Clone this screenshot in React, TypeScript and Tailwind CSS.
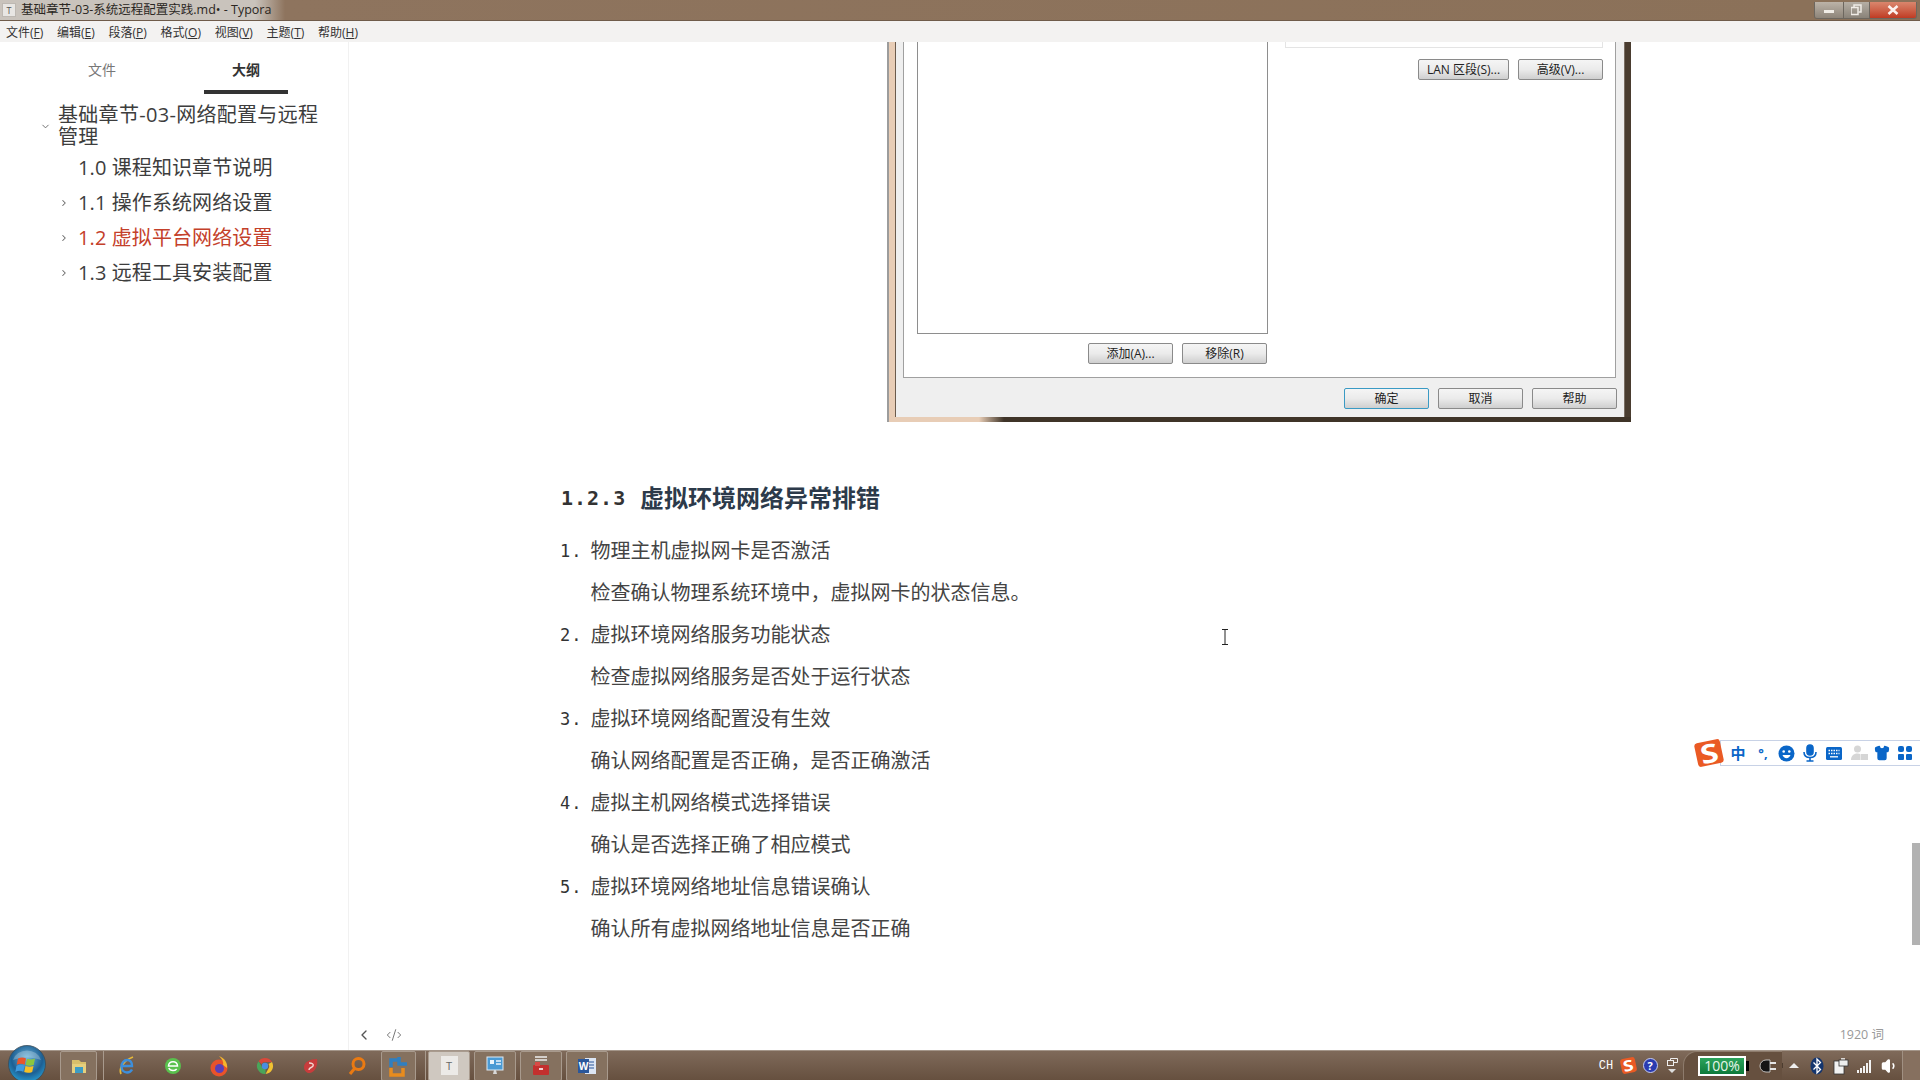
import { ChevronDown, ChevronLeft, ChevronRight, CodeXml, Shirt, Volume1 } from "lucide-react";

const menuItems = [
  { label: "文件", key: "F" },
  { label: "编辑", key: "E" },
  { label: "段落", key: "P" },
  { label: "格式", key: "O" },
  { label: "视图", key: "V" },
  { label: "主题", key: "T" },
  { label: "帮助", key: "H" },
];

const outline = [
  { text: "1.0 课程知识章节说明", arrow: false, active: false },
  { text: "1.1 操作系统网络设置", arrow: true, active: false },
  { text: "1.2 虚拟平台网络设置", arrow: true, active: true },
  { text: "1.3 远程工具安装配置", arrow: true, active: false },
];

const steps = [
  { title: "物理主机虚拟网卡是否激活", desc: "检查确认物理系统环境中，虚拟网卡的状态信息。" },
  { title: "虚拟环境网络服务功能状态", desc: "检查虚拟网络服务是否处于运行状态" },
  { title: "虚拟环境网络配置没有生效", desc: "确认网络配置是否正确，是否正确激活" },
  { title: "虚拟主机网络模式选择错误", desc: "确认是否选择正确了相应模式" },
  { title: "虚拟环境网络地址信息错误确认", desc: "确认所有虚拟网络地址信息是否正确" },
];

function WinButton({ label, primary, className }: { label: string; primary?: boolean; className?: string }) {
  return (
    <div
      className={`h-[21px] w-[85px] flex items-center justify-center rounded-[2px] border bg-linear-to-b from-[#f5f5f5] via-[#ebebeb] to-[#cfcfcf] text-[12px] leading-none text-[#222] ${
        primary ? "border-[#3a9ac4]" : "border-[#8a8a8a]"
      } ${className ?? ""}`}
    >
      {label}
    </div>
  );
}

function TitleBar() {
  return (
    <div className="h-[21px] shrink-0 flex items-center border-b border-[#6f5b4a] bg-[linear-gradient(to_right,#c9c3bc_0,#c9c3bc_255px,#8e745e_285px,#8b7159_1800px)]">
      <div className="w-[14px] h-[14px] ml-[2px] bg-[#e8e6e3] border border-[#bdb8b2] flex items-center justify-center text-[9px] leading-none text-[#555]">T</div>
      <span className="ml-[5px] pt-[1px] text-[12.5px] leading-none text-[#2a2622]">基础章节-03-系统远程配置实践.md• - Typora</span>
      <div className="ml-auto mr-[3px] h-[17px] w-[103px] flex border border-t-0 border-[#6d675f] rounded-b-[3px] overflow-hidden">
        <div className="w-[28px] bg-linear-to-b from-[#bcb3a8] to-[#8e857a] flex items-center justify-center">
          <div className="w-[10px] h-[3px] mt-[4px] bg-[#f0ece6]" />
        </div>
        <div className="w-[27px] bg-linear-to-b from-[#b5aea4] to-[#8a8379] border-x border-[#6d675f] flex items-center justify-center">
          <svg width="12" height="12" viewBox="0 0 12 12" fill="none" stroke="#f0ece6" strokeWidth="1.5">
            <rect x="0" y="3.5" width="7" height="7" />
            <path d="M3 3V1h7v7H7.5" />
          </svg>
        </div>
        <div className="flex-1 bg-linear-to-b from-[#d9866d] to-[#bf3a22] flex items-center justify-center">
          <svg width="12" height="10" viewBox="0 0 12 10" stroke="#fbf2ee" strokeWidth="2.6">
            <path d="M1.5 1l9 8M10.5 1l-9 8" />
          </svg>
        </div>
      </div>
    </div>
  );
}

function MenuBar() {
  return (
    <div className="h-[21px] shrink-0 flex items-center gap-[13.7px] pl-[6px] pt-[2px] bg-[#f3f2f1] text-[12px] leading-none text-[#333]">
      {menuItems.map((item) => (
        <span key={item.key}>
          {item.label}(<span className="underline">{item.key}</span>)
        </span>
      ))}
    </div>
  );
}

function Sidebar() {
  return (
    <div className="w-[349px] shrink-0 border-r border-[#f1f1f1] text-[#3d3d3d]">
      <div className="h-[52px] flex">
        <div className="w-[204px] flex items-start justify-center pt-[18px] text-[14px] leading-[19px] text-[#777]">文件</div>
        <div className="w-[84px] h-[52px] flex items-start justify-center pt-[18px] border-b-4 border-[#333] text-[14px] leading-[19px] font-bold text-[#333]">大纲</div>
      </div>
      <div className="pt-[10px]">
        <div className="flex items-center pl-[40px] text-[20px] leading-[22px]">
          <ChevronDown className="w-[11px] h-[11px] mr-[7px] shrink-0 text-[#666]" strokeWidth={2} />
          <span className="w-[272px] tracking-[0.3px]">基础章节-03-网络配置与远程管理</span>
        </div>
        <div className="mt-[2px]">
          {outline.map((row) => (
            <div key={row.text} className={`h-[35px] flex items-center pl-[59px] text-[20px] tracking-[0.1px] ${row.active ? "text-[#c4402a]" : ""}`}>
              <div className="w-[19px] shrink-0">
                {row.arrow && <ChevronRight className="w-[10px] h-[10px] text-[#666]" strokeWidth={2.5} />}
              </div>
              <span>{row.text}</span>
            </div>
          ))}
        </div>
      </div>
    </div>
  );
}

function NetworkDialog() {
  return (
    <div className="ml-[538px] w-[744px] h-[380px] flex flex-col border-l-2 border-[#9c9c9c] text-[12px]">
      <div className="flex-1 min-h-0 flex">
        <div className="w-[7px] bg-[#e8cdb6] border-r border-[#6b5b4c]" />
        <div className="flex-1 bg-[#efefef] flex flex-col">
          <div className="ml-[7px] mr-[8px] flex-1 min-h-0 flex bg-white border-x border-b border-[#a0a0a0]">
            <div className="w-[381px] pl-[13px] flex flex-col">
              <div className="w-[351px] h-[292px] border-x border-b border-[#8e8e8e] bg-white" />
              <div className="w-[351px] flex justify-end gap-[9px] mt-[9px] pr-[1px]">
                <WinButton label="添加(A)..." />
                <WinButton label="移除(R)" />
              </div>
            </div>
            <div className="flex-1 pr-[12px]">
              <div className="h-[6px] border-x border-b border-[#e4e4e4]" />
              <div className="flex justify-end gap-[9px] mt-[11px]">
                <WinButton label="LAN 区段(S)..." className="w-[91px]" />
                <WinButton label="高级(V)..." />
              </div>
            </div>
          </div>
          <div className="h-[39px] shrink-0 flex items-start justify-end gap-[9px] pt-[10px] pr-[7px]">
            <WinButton label="确定" primary />
            <WinButton label="取消" />
            <WinButton label="帮助" />
          </div>
        </div>
        <div className="w-[7px] bg-[#4a3d30] border-l border-[#7a6f64]" />
      </div>
      <div className="h-[5px] shrink-0 bg-[linear-gradient(to_right,#e8cdb6_0,#e8cdb6_90px,#3f3428_115px,#3f3428_100%)]" />
    </div>
  );
}

function Article() {
  return (
    <div className="flex-1 min-h-0 overflow-hidden">
      <NetworkDialog />
      <h2 className="ml-[212px] mt-[55px] h-[42px] flex items-center text-[24px] font-bold text-[#2c3a4a]">
        <span className="w-[79px] font-['DejaVu_Sans_Mono',monospace] text-[20px] tracking-[1px] text-[#333]">1.2.3</span>
        <span>虚拟环境网络异常排错</span>
      </h2>
      <ol className="ml-[211px] mt-[11px] text-[20px] leading-[42px] text-[#444]">
        {steps.map((step, i) => (
          <li key={step.title} className="flex">
            <span className="w-[30.5px] shrink-0 font-['DejaVu_Sans_Mono',monospace] text-[17px] tracking-[1px] text-[#333]">{i + 1}.</span>
            <div>
              <p>{step.title}</p>
              <p>{step.desc}</p>
            </div>
          </li>
        ))}
      </ol>
    </div>
  );
}

function StatusBar() {
  return (
    <div className="h-[30px] shrink-0 flex items-center pl-[7px] pr-[36px] text-[#999]">
      <ChevronLeft className="w-[16px] h-[16px] text-[#555]" strokeWidth={2} />
      <CodeXml className="w-[16px] h-[16px] ml-[14px] text-[#777]" strokeWidth={1.5} />
      <span className="ml-auto text-[12.5px]">1920 词</span>
    </div>
  );
}

function SogouLogo({ size }: { size: "lg" | "sm" }) {
  const box = size === "lg" ? "w-[26px] h-[24px] text-[26px]" : "w-[15px] h-[15px] text-[15px]";
  return (
    <div className={`${box} -rotate-12 rounded-[3px] bg-[#ea5a24] flex items-center justify-center font-bold leading-none text-white`}>
      <span className="scale-x-125">S</span>
    </div>
  );
}

function SogouBar() {
  return (
    <div className="absolute left-[1696px] top-[740px] flex items-center">
      <div className="relative z-10 -mr-[2px]">
        <SogouLogo size="lg" />
      </div>
      <div className="w-[200px] h-[26px] flex items-center border border-r-0 border-[#c8d2e6] bg-white text-[#0a66c8]">
        <span className="w-[22px] ml-[6px] text-center text-[15px] font-bold leading-none">中</span>
        <span className="w-[24px] ml-[2px] text-center text-[13px] font-bold leading-none">°,</span>
        <svg className="ml-[3px]" width="17" height="17" viewBox="0 0 17 17">
          <circle cx="8.5" cy="8.5" r="8" fill="#0a66c8" />
          <circle cx="5.7" cy="6.5" r="1.3" fill="#fff" />
          <circle cx="11.3" cy="6.5" r="1.3" fill="#fff" />
          <path d="M4.5 10h8c-.6 2-2.200 3.200-4 3.200S5.100 12 4.500 10z" fill="#fff" />
        </svg>
        <svg className="ml-[7px]" width="16" height="18" viewBox="0 0 16 18" fill="none" stroke="#0a66c8" strokeWidth="1.6">
          <rect x="5" y="1" width="6" height="10" rx="3" fill="#0a66c8" />
          <path d="M2 8c0 3.500 2.500 5.500 6 5.500s6-2 6-5.500M8 13.500V17M4.500 17h7" />
        </svg>
        <svg className="ml-[8px]" width="16" height="13" viewBox="0 0 16 13">
          <rect width="16" height="13" rx="1.5" fill="#0a66c8" />
          <path d="M2.500 3.500h11M2.500 6.500h11" stroke="#fff" strokeWidth="1.300" strokeDasharray="1.500 1" />
          <path d="M4 9.800h8" stroke="#fff" strokeWidth="1.300" />
        </svg>
        <svg className="ml-[9px]" width="17" height="16" viewBox="0 0 17 16" fill="#d6d6d6">
          <circle cx="6.500" cy="4" r="3.500" />
          <path d="M0 15c0-4 2.500-6.500 6.500-6.500 1.300 0 2.300.3 3 .7V15z" />
          <rect x="10" y="9" width="7" height="6" />
        </svg>
        <Shirt className="w-[16px] h-[16px] ml-[6px] fill-[#0a66c8]" />
        <svg className="ml-[8px]" width="14" height="14" viewBox="0 0 14 14" fill="#0a66c8">
          <rect width="6" height="6" rx="2" />
          <rect x="8" width="6" height="6" rx="2" />
          <rect y="8" width="6" height="6" rx="1" />
          <rect x="8" y="8" width="6" height="6" rx="1" />
        </svg>
      </div>
    </div>
  );
}

function StartOrb() {
  return (
    <svg className="absolute left-[8px] -top-[6px]" width="38" height="38" viewBox="0 0 38 38">
      <defs>
        <radialGradient id="orb" cx="50%" cy="35%" r="70%">
          <stop offset="0%" stopColor="#6fb7dc" />
          <stop offset="60%" stopColor="#1d5f93" />
          <stop offset="100%" stopColor="#2aa7dc" />
        </radialGradient>
      </defs>
      <circle cx="19" cy="19" r="18.5" fill="url(#orb)" stroke="#3b4b57" strokeWidth="0.8" />
      <path d="M5 15a14.500 13 0 0 1 28 0c-8-3.500-20-3.500-28 0z" fill="#fff" fillOpacity="0.25" />
      <path d="M10 13.500q4-2 8 0l-1.300 6.200q-4-1.800-8 0z" fill="#e8562c" />
      <path d="M19 13.700q4 1.600 8-.2l-1.300 6.400q-4 1.600-8 .1z" fill="#8cc63f" />
      <path d="M8.500 20.700q4-1.800 8 0l-1.200 6q-4-1.800-8 .2z" fill="#3f9be0" />
      <path d="M17.500 21q4 1.500 8-.1l-1.300 6q-4 1.700-8 .2z" fill="#f6c025" />
    </svg>
  );
}

function AppIcon({ name }: { name: string }) {
  switch (name) {
    case "folder":
      return (
        <svg width="20" height="20" viewBox="0 0 20 20">
          <path d="M3 4h7l2 2h5v3H3z" fill="#d9bf6a" />
          <rect x="3" y="8" width="14" height="9" fill="#e6cf7d" />
          <rect x="6" y="11" width="8" height="6" fill="#3d9cc4" />
        </svg>
      );
    case "ie":
      return (
        <svg width="22" height="22" viewBox="0 0 22 22" fill="none">
          <path d="M5 19C3 15 6 6 17 2" stroke="#e6b93a" strokeWidth="1.8" />
          <path d="M16 14.500c-1 2-2.700 3-5 3-3.300 0-5.500-2.600-5.500-6s2.400-6.500 5.700-6.500 5 2.700 4.800 6H6" stroke="#3d8fdc" strokeWidth="2.4" />
        </svg>
      );
    case "green":
      return (
        <svg width="18" height="18" viewBox="0 0 18 18">
          <circle cx="9" cy="9" r="8" fill="#59c14d" />
          <path d="M13.500 9H4.500c0-2.500 2-4.300 4.500-4.300S13.500 6.500 13.500 9zM4.800 11c.6 1.500 2.200 2.500 4.200 2.500 1.500 0 2.800-.6 3.700-1.600" stroke="#fff" strokeWidth="1.500" fill="none" />
        </svg>
      );
    case "firefox":
      return (
        <svg width="20" height="22" viewBox="0 0 20 22">
          <circle cx="10" cy="13" r="8.500" fill="#e8532b" />
          <path d="M10 1c3 3 5 6 4 9l4 3c1-4-2-10-8-12z" fill="#f7b52d" />
          <circle cx="10.500" cy="13.500" r="4.500" fill="#5a3fb8" />
        </svg>
      );
    case "chrome":
      return (
        <svg width="18" height="18" viewBox="0 0 18 18">
          <path d="M9 1a8 8 0 0 1 7 4H9a4 4 0 0 0-3.500 2L2.600 4.200A8 8 0 0 1 9 1z" fill="#d9483a" />
          <path d="M16 5a8 8 0 0 1-6.500 12l3-5.500A4 4 0 0 0 12.500 7z" fill="#f1c232" />
          <path d="M9.500 17A8 8 0 0 1 2.600 4.200l3 5.300a4 4 0 0 0 4 2.500z" fill="#4aa55a" />
          <circle cx="9" cy="9" r="3.200" fill="#4a8ee0" />
        </svg>
      );
    case "red":
      return (
        <svg width="18" height="18" viewBox="0 0 18 18">
          <path d="M2 10C2 5 8 2 15 2c1 5-1 13-7 14-4 .5-6-3-6-6z" fill="#c83c3c" />
          <path d="M7 6c3 0 5 1 4 3s-4 1-4 4" stroke="#f2d6d0" strokeWidth="1.500" fill="none" />
        </svg>
      );
    case "search":
      return (
        <svg width="20" height="20" viewBox="0 0 20 20" fill="none" stroke="#ea7a12" strokeWidth="3">
          <circle cx="11.500" cy="8" r="5.500" />
          <path d="M7.500 12.500L3 18" />
        </svg>
      );
    case "box":
      return (
        <svg width="22" height="24" viewBox="0 0 22 24" fill="none" strokeWidth="3.500">
          <path d="M3 13V6h8" stroke="#2f7fc1" />
          <path d="M11 3v7h8" stroke="#2f7fc1" />
          <path d="M3 14v7h12v-7" stroke="#e88c1e" />
        </svg>
      );
    case "typora":
      return (
        <div className="w-[17px] h-[19px] bg-[#eceae7] flex items-center justify-center text-[11px] leading-none text-[#666]">T</div>
      );
    case "remote":
      return (
        <svg width="20" height="22" viewBox="0 0 20 22">
          <rect x="2" y="2" width="16" height="13" fill="#4a9ad4" stroke="#dfeaf2" />
          <rect x="5" y="5" width="4" height="4" fill="#eaf4fb" />
          <path d="M11 6h5M11 9h5" stroke="#eaf4fb" strokeWidth="1.500" />
          <path d="M8 19h4l-1-4H9z" fill="#d8d8d8" />
        </svg>
      );
    case "box2":
      return (
        <svg width="20" height="22" viewBox="0 0 20 22">
          <path d="M4 2h12M4 5h12" stroke="#eee" strokeWidth="1.500" />
          <rect x="2" y="10" width="16" height="10" rx="1" fill="#c3302e" />
          <rect x="4" y="7" width="5" height="4" fill="#d94a45" />
          <rect x="8" y="13" width="4" height="2" fill="#f0d0d0" />
        </svg>
      );
    default:
      return (
        <svg width="20" height="22" viewBox="0 0 20 22">
          <rect x="8" y="3" width="11" height="16" fill="#dce6f4" />
          <path d="M11 7h6M11 10h6M11 13h6" stroke="#2b579a" />
          <rect x="1" y="4" width="11" height="14" fill="#2b579a" />
          <text x="6.500" y="15" textAnchor="middle" fontSize="10" fontWeight="700" fill="#fff">W</text>
        </svg>
      );
  }
}

function TaskButton({ name, light }: { name: string; light?: boolean }) {
  return (
    <div className={`w-[42px] h-[30px] flex items-center justify-center rounded-[2px] border border-[#a89a8d] ${light ? "bg-[#cfc8c0]" : "bg-[#85715f]"}`}>
      <AppIcon name={name} />
    </div>
  );
}

function Tray() {
  return (
    <div className="ml-auto flex items-center h-full text-white">
      <span className="w-[22px] text-center font-['Liberation_Mono',monospace] text-[12px] leading-none">CH</span>
      <div className="w-[22px] flex justify-center">
        <SogouLogo size="sm" />
      </div>
      <div className="w-[22px] flex justify-center">
        <div className="w-[15px] h-[15px] rounded-full bg-[#2a3bb0] border border-[#c6ccf0] flex items-center justify-center text-[11px] font-bold leading-none">?</div>
      </div>
      <div className="w-[22px] flex flex-col items-center gap-[3px]">
        <svg width="11" height="8" viewBox="0 0 11 8" fill="none" stroke="#eee">
          <rect x="0.500" y="2.500" width="6" height="5" />
          <path d="M3.500 2V.5h7v4H7" />
        </svg>
        <div className="w-0 h-0 border-x-[4px] border-x-transparent border-t-[4px] border-t-[#ddd]" />
      </div>
      <div className="w-[99px] h-full flex items-center pl-[14px] border-t border-l border-[#8d7b6c] rounded-tl-[14px] bg-[#66503f]">
        <div className="w-[48px] h-[20px] border-2 border-white bg-linear-to-b from-[#2ba45c] to-[#0d7a3a] flex items-center justify-center text-[14px] leading-none text-[#e7f7ea]">100%</div>
        <div className="w-[3px] h-[10px] bg-black" />
        <svg className="ml-[10px]" width="18" height="14" viewBox="0 0 18 14">
          <path d="M7 1a6 6 0 0 0 0 12h4V1z" fill="#151515" stroke="#ddd" strokeWidth="0.8" />
          <path d="M11 4h6M11 10h6" stroke="#e5e5e5" strokeWidth="2" />
        </svg>
      </div>
      <div className="w-[23px] flex justify-center border-l border-[#4c3c2f]">
        <div className="w-0 h-0 border-x-[5px] border-x-transparent border-b-[5px] border-b-[#eee]" />
      </div>
      <div className="w-[24px] flex justify-center">
        <svg width="14" height="18" viewBox="0 0 14 18">
          <ellipse cx="7" cy="9" rx="6.500" ry="8.500" fill="#14356e" />
          <path d="M3.500 5.500l7 7L7 16V2l3.500 3.500-7 7" fill="none" stroke="#fff" strokeWidth="1.300" />
        </svg>
      </div>
      <div className="w-[23px] flex justify-center">
        <svg width="16" height="18" viewBox="0 0 16 18">
          <rect x="1" y="4" width="10" height="13" fill="#f2f2f2" stroke="#333" strokeWidth="0.800" />
          <path d="M7 9V4h2V1M11 4V1" stroke="#fff" strokeWidth="1.500" />
          <rect x="6" y="3" width="9" height="6" fill="#eee" stroke="#333" strokeWidth="0.800" />
        </svg>
      </div>
      <div className="w-[25px] flex justify-center">
        <svg width="16" height="14" viewBox="0 0 16 14" fill="#f2f2f2">
          <rect x="0" y="11" width="2" height="3" />
          <rect x="3" y="9" width="2" height="5" />
          <rect x="6" y="7" width="2" height="7" />
          <rect x="9" y="4" width="2" height="10" />
          <rect x="12" y="1" width="2" height="13" />
        </svg>
      </div>
      <div className="w-[25px] flex justify-center">
        <Volume1 className="w-[18px] h-[18px] fill-white" />
      </div>
      <div className="w-[18px] h-full border-l border-[#a09082] bg-[#86705f]" />
    </div>
  );
}

function Taskbar() {
  return (
    <div className="relative h-[30px] shrink-0 flex items-center pl-[60px] bg-linear-to-b from-[#7f6a5a] to-[#66503f] border-t border-[#a4968a]">
      <StartOrb />
      <div className="w-[37px] h-[30px] flex items-center justify-center rounded-[2px] border border-[#a89a8d] bg-[#85715f]">
        <AppIcon name="folder" />
      </div>
      <div className="w-[7px] h-full border-r border-[#a89a8d]" />
      {["ie", "green", "firefox", "chrome", "red", "search"].map((name) => (
        <div key={name} className="w-[46px] flex justify-center">
          <AppIcon name={name} />
        </div>
      ))}
      <div className="ml-[1px] w-[35px] h-[30px] flex items-center justify-center rounded-[2px] border border-[#a89a8d] bg-[#85715f]">
        <AppIcon name="box" />
      </div>
      <div className="w-[10px] h-full border-r border-[#a89a8d]" />
      <div className="ml-[2px] flex gap-[4px]">
        <TaskButton name="typora" light />
        <TaskButton name="remote" />
        <TaskButton name="box2" />
        <TaskButton name="word" />
      </div>
      <Tray />
    </div>
  );
}

export default function App() {
  return (
    <div className="relative w-[1920px] h-[1080px] overflow-hidden flex flex-col bg-white font-['Open_Sans','Noto_Sans_CJK_SC',sans-serif]">
      <TitleBar />
      <MenuBar />
      <div className="flex-1 min-h-0 flex">
        <Sidebar />
        <div className="flex-1 min-w-0 flex flex-col">
          <Article />
          <StatusBar />
        </div>
      </div>
      <Taskbar />
      <div className="absolute right-0 top-[843px] w-[8px] h-[102px] bg-[#b2b2b2]" />
      <SogouBar />
      <svg className="absolute left-[1221px] top-[629px]" width="8" height="16" viewBox="0 0 8 16" fill="none" stroke="#222" strokeWidth="1">
        <path d="M1 .5h6M4 .5v15M1 15.500h6" />
      </svg>
    </div>
  );
}
